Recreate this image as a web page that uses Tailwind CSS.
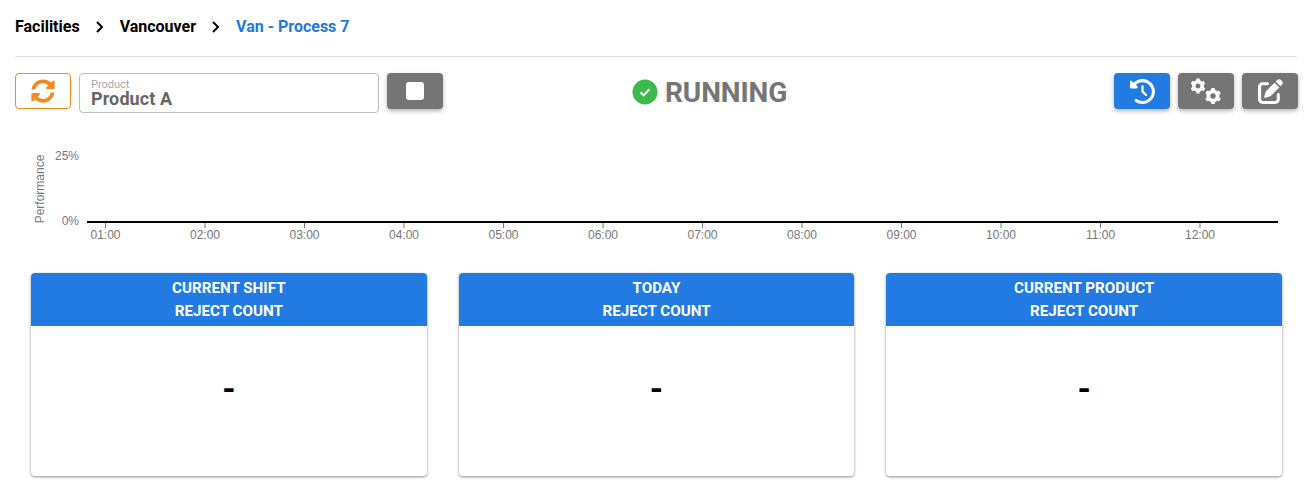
<!DOCTYPE html>
<html>
<head>
<meta charset="utf-8">
<script src="https://cdn.jsdelivr.net/npm/@tailwindcss/browser@4"></script>
</head>
<body class="bg-white font-['Roboto',sans-serif] overflow-hidden">
<div class="h-[495px] w-[1312px] flex flex-col">
  <nav class="h-[57px] mx-[15px] w-[1282px] border-b border-[#e0e0e0] flex items-center pb-[2px] text-[16px] font-bold leading-none">
    <span class="text-black">Facilities</span>
    <svg class="w-[10px] h-[14px] ml-[15px] mr-[15px]" viewBox="0 0 10 14" fill="none" stroke="black" stroke-width="2"><path d="M2 2l5 5-5 5"/></svg>
    <span class="text-black">Vancouver</span>
    <svg class="w-[10px] h-[14px] ml-[15px] mr-[15px]" viewBox="0 0 10 14" fill="none" stroke="black" stroke-width="2"><path d="M2 2l5 5-5 5"/></svg>
    <span class="text-[#2079e0]">Van - Process 7</span>
  </nav>

  <div class="relative h-[40px] mt-[16px] ml-[15px] w-[1283px] flex items-start">
    <button class="w-[56px] h-[36px] rounded border border-[#ef8b22] flex items-center justify-center">
      <svg class="w-[24px] h-[24px]" viewBox="0 0 512 512" fill="#ef8b22"><path d="M370.72 133.28C339.458 104.008 298.888 87.962 255.848 88c-77.458.068-144.328 53.178-162.791 126.85-1.344 5.363-6.122 9.15-11.651 9.15H24.103c-7.498 0-13.194-6.807-11.807-14.176C33.933 94.924 134.813 8 256 8c66.448 0 126.791 26.136 171.315 68.685L463.03 40.97C478.149 25.851 504 36.559 504 57.941V192c0 13.255-10.745 24-24 24H345.941c-21.382 0-32.09-25.851-16.971-40.971l41.75-41.749zM32 296h134.059c21.382 0 32.09 25.851 16.971 40.971l-41.75 41.75c31.262 29.273 71.835 45.319 114.876 45.28 77.418-.07 144.315-53.144 162.787-126.849 1.344-5.363 6.122-9.15 11.651-9.15h57.304c7.498 0 13.194 6.807 11.807 14.176C478.067 417.076 377.187 504 256 504c-66.448 0-126.791-26.136-171.315-68.685L48.97 471.03C33.851 486.149 8 475.441 8 454.059V320c0-13.255 10.745-24 24-24z"/></svg>
    </button>
    <div class="ml-[8px] w-[300px] h-[40px] rounded border border-[#bdbdbd] pl-[11px] pt-[5px]">
      <div class="text-[11px] leading-[11px] text-[#a8a8a8]">Product</div>
      <div class="text-[18px] leading-[17px] font-bold tracking-[0.1px] text-[#666666]">Product A</div>
    </div>
    <button class="ml-[8px] w-[56px] h-[36px] rounded bg-[#757575] shadow-[0_2px_4px_rgba(0,0,0,0.3)] flex items-center justify-center">
      <span class="block w-[18px] h-[18px] bg-white rounded-[3px]"></span>
    </button>

    <div class="absolute left-[617px] top-[3px] flex items-center h-[34px]">
      <svg class="w-[26px] h-[26px] -mt-[2px]" viewBox="0 0 26 26"><circle cx="13" cy="13" r="12.500" fill="#3cb94b"/><path d="M8.500 13.300l3.100 3 5.900-6" fill="none" stroke="white" stroke-width="2.200"/></svg>
      <span class="ml-[7px] text-[28px] leading-none font-bold text-[#757575] tracking-[-0.1px]">RUNNING</span>
    </div>

    <div class="ml-auto flex gap-[8px]">
      <button class="w-[56px] h-[36px] rounded bg-[#227be2] shadow-[0_2px_4px_rgba(0,0,0,0.3)] flex items-center justify-center">
        <svg class="w-[25px] h-[25px]" viewBox="0 0 512 512" fill="white"><path d="M75 75L41 41C25.900 25.900 0 36.600 0 57.900V168c0 13.300 10.700 24 24 24H134.100c21.400 0 32.100-25.900 17-41l-30.800-30.800C155 85.500 203 64 256 64c106 0 192 86 192 192s-86 192-192 192c-40.800 0-78.600-12.700-109.700-34.400c-14.500-10.100-34.400-6.600-44.600 7.900s-6.600 34.400 7.900 44.600C151.200 495 201.700 512 256 512c141.400 0 256-114.600 256-256S397.400 0 256 0C185.300 0 121.300 28.700 75 75zm181 53c-13.300 0-24 10.700-24 24V256c0 6.400 2.500 12.500 7 17l72 72c9.400 9.400 24.600 9.400 33.900 0s9.400-24.600 0-33.900l-65-65V152c0-13.300-10.700-24-24-24z"/></svg>
      </button>
      <button class="w-[56px] h-[36px] rounded bg-[#757575] shadow-[0_2px_4px_rgba(0,0,0,0.3)] flex items-center justify-center">
        <svg class="w-[30px] h-[26px]" viewBox="0 0 30 26" fill="none" stroke="white">
          <g transform="translate(7 8)"><circle r="4.200" stroke-width="3.600"/><path stroke-width="3.400" d="M0-5V-7.400M0 5V7.400M4.330-2.500L6.410-3.700M4.330 2.500L6.410 3.700M-4.330-2.500L-6.410-3.700M-4.330 2.500L-6.410 3.700"/></g>
          <g transform="translate(22 18)"><circle r="4.600" stroke-width="3.800"/><path stroke-width="3.600" d="M0-5.500V-8M0 5.500V8M4.760-2.750L6.930-4M4.760 2.750L6.930 4M-4.760-2.750L-6.930-4M-4.760 2.750L-6.930 4"/></g>
        </svg>
      </button>
      <button class="w-[56px] h-[36px] rounded bg-[#757575] shadow-[0_2px_4px_rgba(0,0,0,0.3)] flex items-center justify-center">
        <svg class="w-[25px] h-[25px]" viewBox="0 0 512 512" fill="white"><path d="M471.600 21.700c-21.900-21.900-57.300-21.900-79.200 0L362.300 51.700l97.900 97.900 30.100-30.100c21.900-21.900 21.900-57.300 0-79.200L471.600 21.700zm-299.200 220c-6.100 6.100-10.800 13.600-13.500 21.900l-29.600 88.800c-2.900 8.600-.6 18.100 5.800 24.600s15.900 8.700 24.600 5.800l88.800-29.600c8.200-2.700 15.700-7.400 21.900-13.500L437.700 172.300 339.700 74.300 172.400 241.700zM96 64C43 64 0 107 0 160V416c0 53 43 96 96 96H352c53 0 96-43 96-96V320c0-17.700-14.300-32-32-32s-32 14.300-32 32v96c0 17.700-14.300 32-32 32H96c-17.700 0-32-14.300-32-32V160c0-17.700 14.300-32 32-32h96c17.700 0 32-14.300 32-32s-14.300-32-32-32H96z"/></svg>
      </button>
    </div>
  </div>

  <svg class="block mt-[20px] w-[1312px] h-[120px] font-['Liberation_Sans',sans-serif] text-[12px]" viewBox="0 133 1312 120">
    <text x="44" y="189" fill="#777777" text-anchor="middle" transform="rotate(-90 44 189)">Performance</text>
    <text x="79" y="160" fill="#777777" text-anchor="end">25%</text>
    <text x="79" y="225" fill="#777777" text-anchor="end">0%</text>
    <path stroke="#777777" d="M105.500 222v6M205 222v6M304.500 222v6M404 222v6M503.500 222v6M603 222v6M702.500 222v6M802 222v6M901.500 222v6M1001 222v6M1100.500 222v6M1200 222v6"/>
    <path d="M87 222H1278" stroke="black" stroke-width="2"/>
    <g fill="#777777" text-anchor="middle">
      <text x="105.500" y="239">01:00</text><text x="205" y="239">02:00</text><text x="304.500" y="239">03:00</text><text x="404" y="239">04:00</text><text x="503.500" y="239">05:00</text><text x="603" y="239">06:00</text><text x="702.500" y="239">07:00</text><text x="802" y="239">08:00</text><text x="901.500" y="239">09:00</text><text x="1001" y="239">10:00</text><text x="1100.500" y="239">11:00</text><text x="1200" y="239">12:00</text>
    </g>
  </svg>

  <div class="mt-[20px] ml-[31px] w-[1251px] grid grid-cols-3 gap-[32px]">
    <div class="h-[203px] rounded bg-white overflow-hidden shadow-[0_1px_3px_rgba(0,0,0,0.45)]">
      <div class="h-[53px] bg-[#227be2] pt-[4px] text-white text-center font-bold text-[15.200px] leading-[23px]"><div>CURRENT SHIFT</div><div>REJECT COUNT</div></div>
      <div class="h-[150px] flex items-center justify-center text-[34px] font-bold text-black pb-[26px]">-</div>
    </div>
    <div class="h-[203px] rounded bg-white overflow-hidden shadow-[0_1px_3px_rgba(0,0,0,0.45)]">
      <div class="h-[53px] bg-[#227be2] pt-[4px] text-white text-center font-bold text-[15.200px] leading-[23px]"><div>TODAY</div><div>REJECT COUNT</div></div>
      <div class="h-[150px] flex items-center justify-center text-[34px] font-bold text-black pb-[26px]">-</div>
    </div>
    <div class="h-[203px] rounded bg-white overflow-hidden shadow-[0_1px_3px_rgba(0,0,0,0.45)]">
      <div class="h-[53px] bg-[#227be2] pt-[4px] text-white text-center font-bold text-[15.200px] leading-[23px]"><div>CURRENT PRODUCT</div><div>REJECT COUNT</div></div>
      <div class="h-[150px] flex items-center justify-center text-[34px] font-bold text-black pb-[26px]">-</div>
    </div>
  </div>
</div>
</body>
</html>
